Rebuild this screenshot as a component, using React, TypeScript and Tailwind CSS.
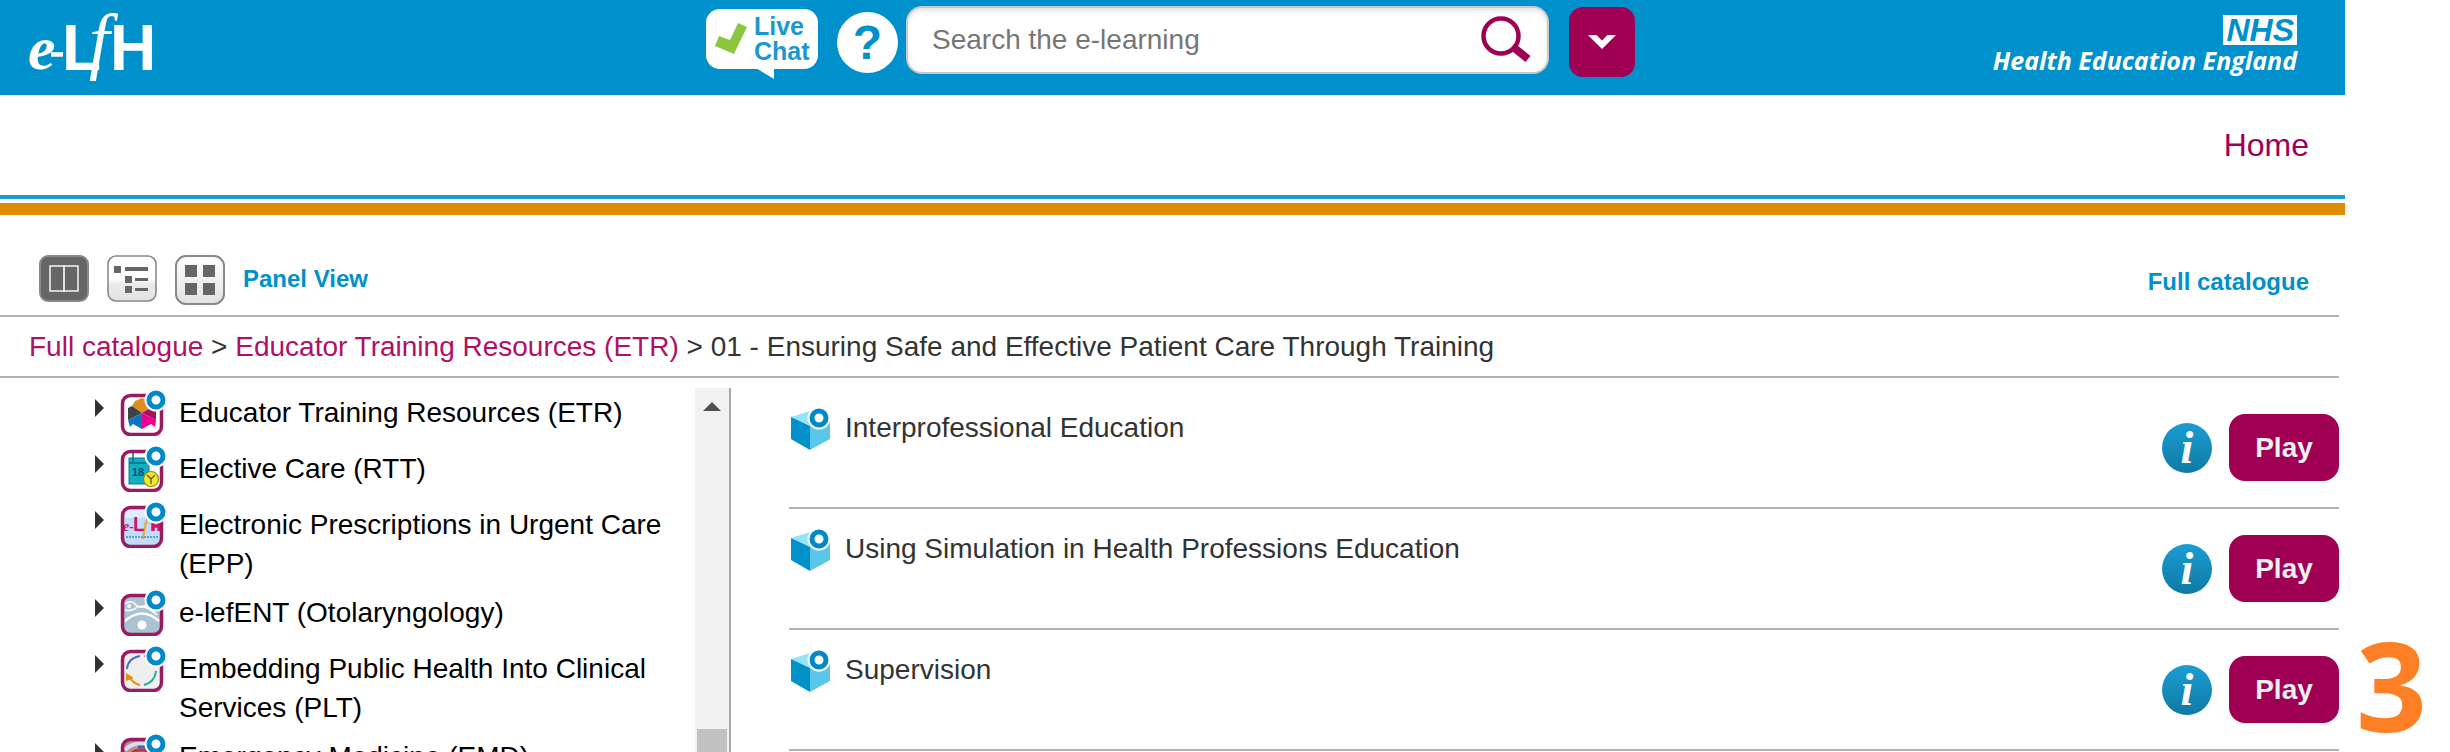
import React from 'react';

interface TreeItem {
  id: string;
  title: string;
  art: React.ReactNode;
}

const VIEWS = [
  {
    id: 'panel',
    label: 'Panel View',
    icon: (
      <svg width="50" height="47" viewBox="0 0 50 47">
        <rect x="1" y="1" width="48" height="45" rx="8" fill="#666" stroke="#8a8a8a" strokeWidth="2" />
        <rect x="11" y="11" width="28" height="25" fill="none" stroke="#fff" strokeWidth="1.4" />
        <path d="M25 10V37" stroke="#fff" strokeWidth="1.6" />
      </svg>
    ),
  },
  {
    id: 'tree',
    label: 'Tree View',
    icon: (
      <svg width="50" height="47" viewBox="0 0 50 47">
        <defs>
          <linearGradient id="treeBg" x1="0" y1="0" x2="0" y2="1">
            <stop offset="0.5" stopColor="#fff" />
            <stop offset="0.62" stopColor="#ebebeb" />
            <stop offset="1" stopColor="#e2e2e2" />
          </linearGradient>
        </defs>
        <rect x="1" y="1" width="48" height="45" rx="8" fill="url(#treeBg)" stroke="#8a8a8a" strokeWidth="1.6" />
        <path d="M7 11h7v7H7zM18 21h7v7h-7zM18 31h7v7h-7zM18 12h23v4H18zM28 23h13v3H28zM28 33h13v3H28z" fill="#666" />
      </svg>
    ),
  },
  {
    id: 'tile',
    label: 'Tile View',
    icon: (
      <svg width="50" height="50" viewBox="0 0 50 50">
        <defs>
          <linearGradient id="tileBg" x1="0" y1="0" x2="0" y2="1">
            <stop offset="0" stopColor="#fff" />
            <stop offset="1" stopColor="#e2e2e2" />
          </linearGradient>
        </defs>
        <rect x="1" y="1" width="48" height="48" rx="10" fill="url(#tileBg)" stroke="#8a8a8a" strokeWidth="2" />
        <path d="M10 10h12v12H10zM28 10h12v12H28zM10 28h12v12H10zM28 28h12v12H28z" fill="#666" />
      </svg>
    ),
  },
];

const TREE: TreeItem[] = [
  {
    id: 'etr',
    title: 'Educator Training Resources (ETR)',
    art: (
      <>
        <path d="M22 23L12 16 15 11 22 8 29 11 33 16z" fill="#e08e24" />
        <path d="M22 23L12 16 8 18 8 30z" fill="#3d4347" />
        <path d="M22 23l11-7 3 2v12z" fill="#a5155f" />
        <path d="M22 23L8 30l2 7 3-3 9 5z" fill="#0f75bd" />
        <path d="M22 23l14 7-1 7-4-3-9 5z" fill="#ec008c" />
      </>
    ),
  },
  {
    id: 'rtt',
    title: 'Elective Care (RTT)',
    art: (
      <>
        <rect x="9" y="12" width="20" height="26" fill="#12b0be" stroke="#0b7d97" />
        <path d="M9 17h21M13 7v9" stroke="#0b6d87" strokeWidth="1.5" />
        <text x="12" y="30" fill="#0b4a80" className="font-['Liberation_Sans'] text-[11px] font-bold">18</text>
        <circle cx="31" cy="33" r="7.5" fill="#f6e52a" stroke="#8c8a1a" strokeWidth="1.2" />
        <path d="M27 29l4 4 4-4M31 33v5" fill="none" stroke="#55641a" strokeWidth="1.3" />
      </>
    ),
  },
  {
    id: 'epp',
    title: 'Electronic Prescriptions in Urgent Care (EPP)',
    art: (
      <>
        <rect x="4" y="7" width="36" height="36" rx="5" fill="#c3dcf8" />
        <path d="M5 8h22v8H5z" fill="#e0edfc" />
        <text x="3" y="29" fill="#c4156c" className="font-['Liberation_Serif'] text-[14px] font-bold italic">e-</text>
        <text x="13" y="29" fill="#d3126e" className="font-['Liberation_Sans'] text-[20px] font-bold">L</text>
        <text x="22" y="32" fill="#f0a62c" className="font-['Liberation_Serif'] text-[24px] italic">f</text>
        <path d="M33 19v10M39 19v10M33 24h6" stroke="#d3126e" strokeWidth="3.5" />
        <path d="M6 35h32" stroke="#5d9fd8" strokeWidth="2" strokeDasharray="2 1" />
      </>
    ),
  },
  {
    id: 'ent',
    title: 'e-lefENT (Otolaryngology)',
    art: (
      <>
        <rect x="4" y="7" width="36" height="36" rx="5" fill="#a9c3d0" />
        <path d="M5 14q6-5 11 1 6 5 12-2M5 20q7 2 12-3 8-3 20 8" fill="none" stroke="#fff" strokeWidth="1.6" />
        <path d="M5 31q17-15 34 0" fill="none" stroke="#fff" strokeWidth="2.4" />
        <circle cx="22" cy="35" r="4.5" fill="#fff" />
        <circle cx="9" cy="16" r="2" fill="#fff" />
      </>
    ),
  },
  {
    id: 'plt',
    title: 'Embedding Public Health Into Clinical Services (PLT)',
    art: (
      <>
        <rect x="4" y="7" width="36" height="36" rx="5" fill="#efefef" />
        <path d="M7 23q1-11 13-13" fill="none" stroke="#4a6fc0" strokeWidth="2" />
        <path d="M24 10q8 1 12 10" fill="none" stroke="#a5155f" strokeWidth="2" strokeDasharray="4 2" />
        <path d="M36 25q-1 11-12 14" fill="none" stroke="#1fae94" strokeWidth="2" />
        <path d="M20 39q-7-1-11-9" fill="none" stroke="#e8930c" strokeWidth="2" />
        <path d="M6 27l8 5-8 3z" fill="#e8930c" />
      </>
    ),
  },
  {
    id: 'emd',
    title: 'Emergency Medicine (EMD)',
    art: (
      <>
        <rect x="4" y="7" width="36" height="36" rx="5" fill="#b98f96" />
        <path d="M5 16q8-8 20-6l12 8" fill="none" stroke="#d8dfe8" strokeWidth="4" />
        <path d="M12 18q10-5 24 2" fill="none" stroke="#c03540" strokeWidth="3" />
        <path d="M18 13h10" stroke="#4a62a8" strokeWidth="3" />
      </>
    ),
  },
];

const COURSES = [
  'Interprofessional Education',
  'Using Simulation in Health Professions Education',
  'Supervision',
];

// Blue ring in the top right corner of every catalogue icon
const Ring = ({ cx, cy }: { cx: number; cy: number }) => (
  <>
    <circle cx={cx} cy={cy} r="11.5" fill="#fff" />
    <circle cx={cx} cy={cy} r="7" fill="#fff" stroke="#0088c8" strokeWidth="5" />
  </>
);

const ElfhLogo = () => (
  <svg width="128" height="84" viewBox="0 0 128 84" fill="#fff" role="img" aria-label="e-LfH">
    <text x="0" y="69" className="font-['Liberation_Serif'] text-[62px] font-bold italic">e</text>
    <path d="M23 54.500H35" stroke="#fff" strokeWidth="4.500" />
    <text x="34" y="70" className="font-['Liberation_Sans'] text-[64px] font-bold">L</text>
    <text x="61" y="65" className="font-['Liberation_Serif'] text-[74px] italic">f</text>
    <text x="82" y="70" className="font-['Liberation_Sans'] text-[64px] font-bold">H</text>
  </svg>
);

const CubeIcon = () => (
  <svg className="shrink-0" width="42" height="42" viewBox="0 0 42 42">
    <path d="M1 9L20 3l20 6-20 9z" fill="#93e3fa" />
    <path d="M1 9l19 9v24L1 31z" fill="#0091ca" />
    <path d="M20 18l20-9v22L20 42z" fill="#5ac6ea" />
    <Ring cx={29} cy={10} />
  </svg>
);

const Header = () => (
  <header className="grid h-[95px] grid-cols-[1fr_auto_1fr] items-start bg-[#0091cc] pr-8 pl-7">
    <a href="#" className="self-start">
      <ElfhLogo />
    </a>
    <div className="flex items-start pt-[6px]">
      <button className="relative mt-[3px] flex h-[60px] w-[112px] items-center gap-[6px] rounded-[14px] bg-white pl-2">
        <svg width="34" height="34" viewBox="0 0 34 34">
          <path d="M5 14L1 24l19 8L33 5 24 1 16 18z" fill="#8cc63f" />
        </svg>
        <span className="text-left text-[25px] leading-[25px] font-bold text-[#1c98cf]">
          Live
          <br />
          Chat
        </span>
        <svg className="absolute top-[59px] left-[50px]" width="19" height="12" viewBox="0 0 19 12">
          <path d="M0 0H18V11z" fill="#fff" />
        </svg>
      </button>
      <button className="mt-[6px] ml-[19px] size-[61px] rounded-full bg-white text-[48px] leading-[58px] font-bold text-[#0091cc]">
        ?
      </button>
      <form className="ml-2 flex h-[68px] w-[643px] items-center rounded-[16px] border-2 border-[#c8c8c8] bg-white pr-4 pl-6 shadow-[inset_0_3px_4px_#0000001a]">
        <input
          type="text"
          aria-label="Search the e-learning"
          placeholder="Search the e-learning"
          className="min-w-0 flex-1 bg-transparent text-[28px] text-[#333] outline-none placeholder:text-[#767676]"
        />
        <button type="button" aria-label="Search">
          <svg width="50" height="48" viewBox="0 0 50 48">
            <circle cx="20" cy="20" r="17.500" fill="none" stroke="#a00054" strokeWidth="4.500" />
            <path d="M32 31L47 43" stroke="#a00054" strokeWidth="8" />
          </svg>
        </button>
      </form>
      <button aria-label="Search options" className="mt-px ml-5 flex h-[70px] w-[66px] items-center justify-center rounded-[14px] bg-[#a00054]">
        <svg width="28" height="14" viewBox="0 0 28 14">
          <path d="M0 0H8.500L14 5.500 19.500 0H28L14 14z" fill="#fff" />
        </svg>
      </button>
    </div>
    <div className="flex flex-col items-end pt-[15px] pr-4">
      <span className="bg-white px-[3px] text-[32px] leading-[30px] font-bold text-[#0091cc] italic">NHS</span>
      <span className="font-['Open_Sans',sans-serif] text-[25px] leading-[30px] font-bold whitespace-nowrap text-white italic">
        Health Education England
      </span>
    </div>
  </header>
);

const App: React.FC = () => {
  return (
    <div className="flex h-screen overflow-hidden bg-white font-['Liberation_Sans',Arial,sans-serif]">
      <div className="flex min-w-0 flex-1 flex-col">
        <Header />

        <nav className="flex h-[100px] items-center justify-end pr-9">
          <a href="#" className="text-[32px] text-[#a00054]">Home</a>
        </nav>
        <div className="h-5 border-t-4 border-b-12 border-t-[#1b9dd4] border-b-[#e08b06]"></div>

        <div className="mr-[6px] flex h-[102px] items-start justify-between border-b-2 border-[#b2b2b2] pt-10 pr-[30px] pl-[39px] text-[24px] leading-[48px] font-bold text-[#0091cc]">
          <div className="flex items-start">
            <div className="flex items-start gap-[18px]">
              {VIEWS.map(view => (
                <button key={view.id} aria-label={view.label}>{view.icon}</button>
              ))}
            </div>
            <span className="ml-[18px]">Panel View</span>
          </div>
          <a href="#" className="pt-[3px]">Full catalogue</a>
        </div>

        <div className="mr-[6px] h-[61px] border-b-2 border-[#b2b2b2] pl-[29px] text-[28px] leading-[59px] whitespace-nowrap text-[#333]">
          <a href="#" className="text-[#b01065]">Full catalogue</a>
          {' > '}
          <a href="#" className="text-[#b01065]">Educator Training Resources (ETR)</a>
          {' > 01 - Ensuring Safe and Effective Patient Care Through Training'}
        </div>

        <main className="flex min-h-0 flex-1 gap-[58px] pt-[10px] pr-[6px]">
          <aside className="flex w-[731px] shrink-0 border-r-2 border-[#a8a8a8]">
            <ul className="flex flex-1 flex-col gap-[10px] overflow-hidden pt-[5px] pl-[94px]">
              {TREE.map(item => (
                <li key={item.id} className="flex min-h-[46px] shrink-0 items-start">
                  <button aria-label={`Expand ${item.title}`} className="pt-[6px]">
                    <svg width="10" height="18" viewBox="0 0 10 18">
                      <path d="M1 0L10 9 1 18z" fill="#333" />
                    </svg>
                  </button>
                  <svg className="-mt-[3px] ml-4 shrink-0" width="48" height="46" viewBox="0 0 48 46">
                    <rect x="2.500" y="5.500" width="39" height="39" rx="8" fill="#fff" />
                    {item.art}
                    <rect x="2.500" y="5.500" width="39" height="39" rx="8" fill="none" stroke="#9b1b63" strokeWidth="3.500" />
                    <Ring cx={36} cy={10} />
                  </svg>
                  <a href="#" className="ml-[11px] text-[28px] leading-[39px] text-black">{item.title}</a>
                </li>
              ))}
            </ul>
            <div className="flex w-[34px] flex-col items-center bg-[#f1f1f1]">
              <svg className="mt-[14px] shrink-0" width="18" height="9" viewBox="0 0 18 9">
                <path d="M9 0l9 9H0z" fill="#505050" />
              </svg>
              <div className="mt-[318px] w-[30px] flex-1 bg-[#c1c1c1]"></div>
            </div>
          </aside>

          <ul className="min-w-0 flex-1">
            {COURSES.map(course => (
              <li key={course} className="flex h-[121px] items-center border-b-2 border-[#b2b2b2]">
                <div className="flex flex-1 items-start gap-[13px] self-stretch pt-5 pl-px">
                  <CubeIcon />
                  <span className="text-[28px] leading-[39px] text-[#333]">{course}</span>
                </div>
                <button
                  aria-label={`About ${course}`}
                  className="size-[50px] rounded-full bg-linear-to-b from-[#1b9dd4] to-[#0e7aa3] font-['Liberation_Serif',serif] text-[46px] leading-[48px] font-bold text-white italic"
                >
                  i
                </button>
                <button className="ml-[17px] h-[67px] w-[110px] rounded-[16px] bg-[#a00054] text-[28px] font-bold text-[#f0f0f0]">
                  Play
                </button>
              </li>
            ))}
          </ul>
        </main>
      </div>

      <div className="flex w-[105px] shrink-0 flex-col items-center justify-end pr-3 pb-1 font-['Open_Sans','Noto_Sans',sans-serif] text-[124px] leading-[128px] font-bold text-[#ff7f27]">
        3
      </div>
    </div>
  );
};

export default App;
